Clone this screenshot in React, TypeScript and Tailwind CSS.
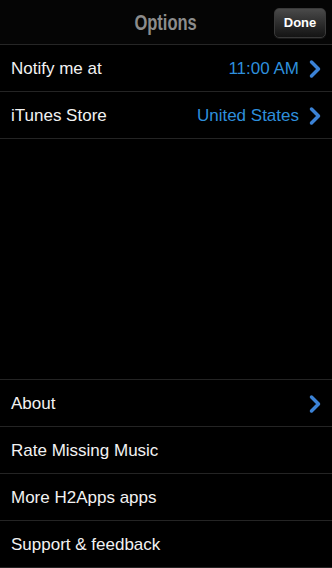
import { ChevronRight } from 'lucide-react';

interface Row {
  label: string;
  value?: string;
  chevron?: boolean;
}

const topRows: Row[] = [
  { label: 'Notify me at', value: '11:00 AM', chevron: true },
  { label: 'iTunes Store', value: 'United States', chevron: true },
];

const bottomRows: Row[] = [
  { label: 'About', chevron: true },
  { label: 'Rate Missing Music' },
  { label: 'More H2Apps apps' },
  { label: 'Support & feedback' },
];

function OptionRow({ row }: { row: Row }) {
  return (
    <div className="flex h-[47px] items-center justify-between border-b border-[#242424] pl-[11px] pr-[3px] pt-[2px]">
      <span className="text-[17px] text-[#f2f2f2]">{row.label}</span>
      <div className="flex items-center gap-[2px]">
        {row.value && <span className="text-[17px] text-[#2e8fdc]">{row.value}</span>}
        {row.chevron && <ChevronRight size={28} strokeWidth={3} className="text-[#3b82d6]" />}
      </div>
    </div>
  );
}

export default function App() {
  return (
    <div className="flex h-[568px] w-[332px] flex-col bg-black" style={{ fontFamily: '"Liberation Sans", Arial, sans-serif' }}>
      {/* Nav bar */}
      <div className="relative flex h-[45px] shrink-0 items-center justify-center border-b border-[#262626] bg-[#050505]">
        <span className="inline-block scale-x-75 text-[22px] font-bold text-[#8c8c8c]">Options</span>
        <button className="absolute right-[6px] top-[8px] flex h-[30px] w-[52px] items-center justify-center rounded-[5px] border border-[#3a3a3a] bg-gradient-to-b from-[#4a4a4a] to-[#141414] text-[13px] font-bold text-white shadow-[0_1px_0_rgba(255,255,255,0.08)]">
          Done
        </button>
      </div>

      <div className="flex flex-col">
        {topRows.map((r) => (
          <OptionRow key={r.label} row={r} />
        ))}
      </div>

      <div className="flex-1" />

      <div className="flex flex-col border-t border-[#242424]">
        {bottomRows.map((r) => (
          <OptionRow key={r.label} row={r} />
        ))}
      </div>
    </div>
  );
}
